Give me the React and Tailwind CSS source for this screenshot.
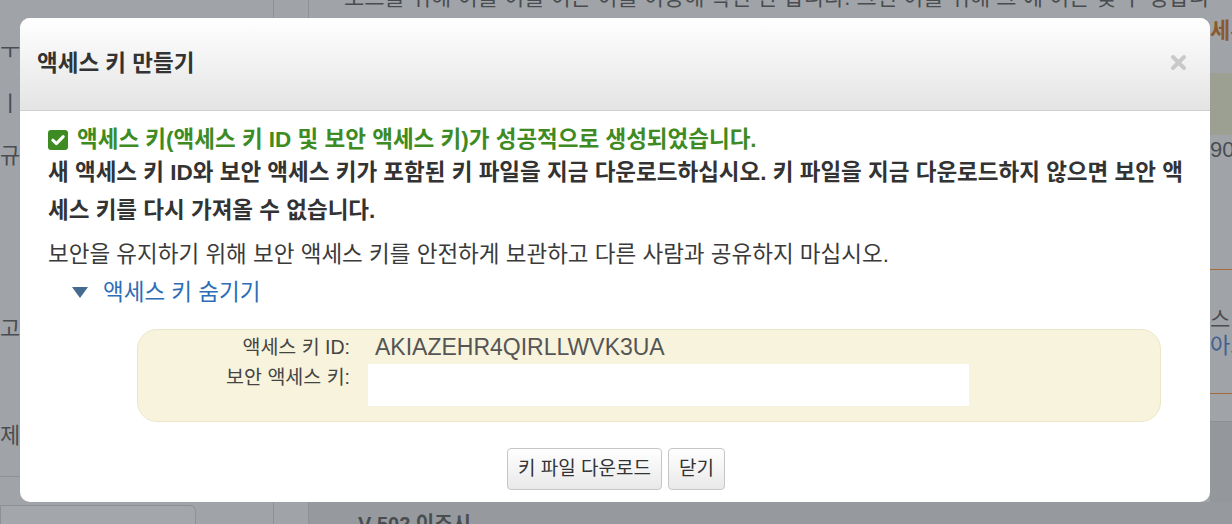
import React from 'react';

const FONT = "font-['Liberation_Sans','Noto_Sans_CJK_KR',sans-serif]";

function CheckIcon() {
  return (
    <svg width="20" height="20" viewBox="0 0 20 20" className="shrink-0">
      <rect x="0" y="0" width="20" height="20" rx="3" fill="#3d8b22" />
      <path d="M4.8 10.2 L8.4 13.6 L15.2 6.6" fill="none" stroke="#fff" strokeWidth="3" strokeLinecap="round" strokeLinejoin="round" />
    </svg>
  );
}

function CloseIcon() {
  return (
    <svg width="17" height="17" viewBox="0 0 17 17">
      <path d="M3 3 L14 14 M14 3 L3 14" stroke="#c9c9c9" strokeWidth="4" strokeLinecap="round" />
    </svg>
  );
}

function Background() {
  return (
    <div className="flex h-full text-[#4a4d50]">
      {/* sidebar */}
      <aside className="w-[274px] shrink-0 border-r border-[#8d9195] flex flex-col text-[22px] overflow-hidden">
        <div className="h-[36px] shrink-0" />
        <div className="leading-[30px]">ㅜ</div>
        <div className="h-[23px] shrink-0" />
        <div className="leading-[30px]">ㅣ</div>
        <div className="h-[22px] shrink-0" />
        <div className="leading-[30px]">규</div>
        <div className="h-[143px] shrink-0" />
        <div className="leading-[30px]">고시</div>
        <div className="h-[77px] shrink-0" />
        <div className="leading-[30px]">제어</div>
        <div className="h-[26px] shrink-0 border-b border-[#8d9195]" />
        <div className="mt-[28px] w-[196px] h-[40px] shrink-0 border border-[#8d9195] rounded-tr-[6px] bg-[#a3a7ab]" />
      </aside>
      <div className="w-[35px] shrink-0 border-r border-[#8d9195]" />
      {/* main */}
      <main className="flex-1 min-w-0 flex flex-col overflow-hidden">
        <div className="flex-1 flex min-h-0">
          <div className="flex-1 min-w-0 pl-[35px] overflow-hidden">
            <p className="-mt-[14px] text-[22px] leading-[24px] whitespace-nowrap">
              로드를 위해 이를 이를 이는 이를 이용해 확인 안 합니다. 그런 이를 위해 그 에 이는 및 수 정합니다
            </p>
          </div>
          <div className="w-[22px] shrink-0 flex flex-col overflow-hidden">
            <div className="h-[18px] shrink-0" />
            <div className="text-[22px] leading-[26px] font-bold text-[#8a5a2c] whitespace-nowrap">세부</div>
            <div className="h-[29px] shrink-0" />
            <div className="h-[62px] shrink-0 bg-[#9ca093]" />
            <div className="text-[22px] leading-[30px] whitespace-nowrap">90</div>
            <div className="h-[105px] shrink-0 border-b border-[#a66a3a]" />
            <div className="h-[37px] shrink-0" />
            <div className="text-[22px] leading-[26px] whitespace-nowrap">스</div>
            <div className="text-[22px] leading-[26px] text-[#3f5f90] whitespace-nowrap">아브</div>
            <div className="h-[35px] shrink-0 border-b border-[#a66a3a]" />
            <div className="h-[28px] shrink-0 border-b border-[#8d9195]" />
            <div className="flex-1 bg-[#94989c]" />
          </div>
        </div>
        <div className="h-[22px] shrink-0 bg-[#969a9e] pl-[49px]">
          <span className="block mt-[12px] text-[20px] font-bold leading-[20px] whitespace-nowrap">V 502 이조시</span>
        </div>
      </main>
    </div>
  );
}

export default function App() {
  return (
    <div className={`relative w-[1232px] h-[524px] overflow-hidden bg-[#a0a4a8] ${FONT}`}>
      <Background />

      {/* modal */}
      <div className="absolute left-[20px] top-[18px] w-[1190px] h-[484px] rounded-[10px] bg-white overflow-hidden flex flex-col">
        <div className="h-[93px] shrink-0 bg-gradient-to-b from-white to-[#e4e4e4] border-b border-[#cfcfcf] flex items-center justify-between pl-[17px] pr-[23px]">
          <h1 className="text-[22.5px] font-bold text-[#333]">액세스 키 만들기</h1>
          <span className="-mt-[4px]"><CloseIcon /></span>
        </div>

        <div className="flex-1 flex flex-col pl-[28px] pr-[4px] pt-[15px]">
          <div className="flex items-center gap-[9px] text-[22.5px] leading-[28px] font-bold text-[#3d8b22] whitespace-nowrap">
            <CheckIcon />
            <span>액세스 키(액세스 키 ID 및 보안 액세스 키)가 성공적으로 생성되었습니다.</span>
          </div>
          <p className="text-[22.5px] leading-[38px] font-bold text-[#333] whitespace-nowrap">
            새 액세스 키 ID와 보안 액세스 키가 포함된 키 파일을 지금 다운로드하십시오. 키 파일을 지금 다운로드하지 않으면 보안 액<br />
            세스 키를 다시 가져올 수 없습니다.
          </p>
          <p className="text-[22.5px] leading-[30px] text-[#3a3a3a] mt-[10px] whitespace-nowrap">
            보안을 유지하기 위해 보안 액세스 키를 안전하게 보관하고 다른 사람과 공유하지 마십시오.
          </p>
          <button className="flex items-center gap-[15px] ml-[24px] mt-[8px] text-[22.5px] leading-[30px] text-[#2d6db5] self-start">
            <svg width="16" height="12" viewBox="0 0 16 12">
              <path d="M0 0 L16 0 L8 11 Z" fill="#456a90" />
            </svg>
            <span>액세스 키 숨기기</span>
          </button>

          <div className="mt-[21px] ml-[89px] w-[1024px] h-[93px] shrink-0 rounded-[20px] bg-[#f7f3dc] border border-[#ebe6c8] grid grid-cols-[212px_1fr] grid-rows-[34px_42px] gap-x-[18px] text-[#444]">
            <div className="text-[19.5px] leading-[34px] text-right">액세스 키 ID:</div>
            <div className="text-[23px] leading-[34px] text-[#555] pl-[7px]">AKIAZEHR4QIRLLWVK3UA</div>
            <div className="text-[19.5px] leading-[26px] text-right">보안 액세스 키:</div>
            <div className="h-[42px] w-[601px] bg-white" />
          </div>

          <div className="flex justify-center gap-[6px] mt-[26px] -ml-[22px]">
            <button className="h-[42px] px-[10px] rounded-[4px] border border-[#c6c6c6] bg-gradient-to-b from-white to-[#e9e9e9] text-[19px] text-[#333]">
              키 파일 다운로드
            </button>
            <button className="h-[42px] px-[10px] rounded-[4px] border border-[#c6c6c6] bg-gradient-to-b from-white to-[#e9e9e9] text-[19px] text-[#333]">
              닫기
            </button>
          </div>
        </div>
      </div>
    </div>
  );
}
